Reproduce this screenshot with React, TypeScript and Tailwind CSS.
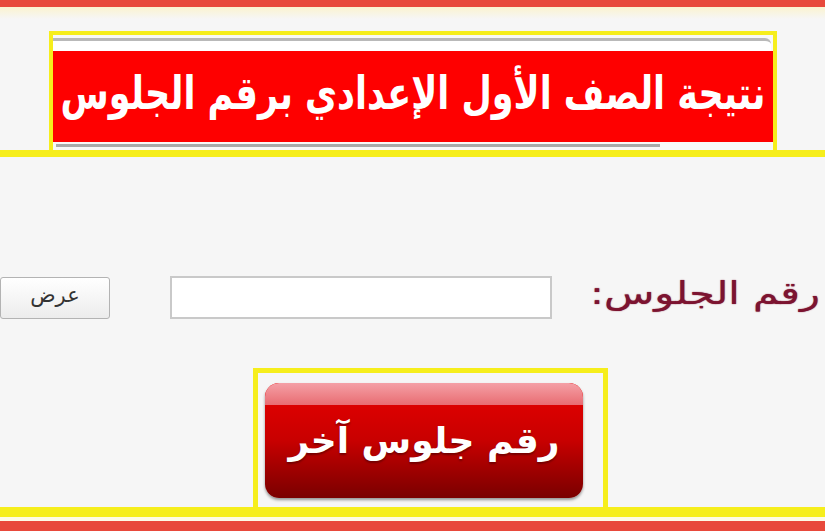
export default function App() {
  return (
    <div className="w-[825px] h-[531px] overflow-hidden bg-[#f6f6f6] flex flex-col" style={{ fontFamily: '"DejaVu Sans", "Noto Sans", sans-serif' }}>
      {/* شريط علوي */}
      <div className="h-[7px] bg-[#e8493b]" />
      <div className="h-[12px] bg-gradient-to-b from-[#fbf3cf] to-[#f6f6f6]" />

      {/* العنوان */}
      <div className="mt-[12px] border-b-[7px] border-[#f6ee1c]">
        <div className="ml-[49px] w-[728px] border-x-[4px] border-t-[4px] border-[#f6ee1c] bg-[#f8f8f8]">
          <div className="mt-[3px] h-[13px] bg-white border-t-[3px] border-[#b9b9b9] rounded-tr-[6px] mr-[2px]" />
          <div className="h-[91px] bg-[#fe0000] flex items-center justify-center overflow-hidden">
            <h1 dir="rtl" className="text-white font-bold text-[35px] whitespace-nowrap leading-none -mt-[4px] scale-y-[1.3]">
              نتيجة الصف الأول الإعدادي برقم الجلوس
            </h1>
          </div>
          <div className="h-[8px] pt-[2px]">
            <div className="h-[3px] w-[604px] ml-[3px] bg-[#a9a9a9]" />
          </div>
        </div>
      </div>

      {/* نموذج البحث */}
      <div className="flex-1 flex flex-col">
        <div className="mt-[119px] flex items-center h-[43px]">
          <button className="w-[110px] h-[42px] shrink-0 border border-[#b3b3b3] rounded-[3px] bg-gradient-to-b from-white to-[#ececec] text-[21px] text-[#333] leading-none pb-[4px]">
            عرض
          </button>
          <input className="ml-[60px] w-[382px] h-[43px] shrink-0 border-2 border-[#c9c9c9] bg-white outline-none" />
          <span dir="rtl" className="ml-[38px] -mt-[8px] shrink-0 whitespace-nowrap text-[31px] font-medium text-[#7c1330] origin-left scale-x-[1.33] [text-shadow:0_0_1px_#7c1330]">
            رقم الجلوس:
          </span>
        </div>

        <div className="mt-[49px] ml-[253px] w-[355px] h-[139px] border-x-[5px] border-t-[5px] border-[#f6ee1c] pt-[10px] pl-[7px]">
          <button className="relative w-[318px] h-[115px] rounded-[14px] overflow-hidden bg-gradient-to-b from-[#e80000] via-[#c80000] to-[#7a0000] shadow-[0_2px_3px_rgba(0,0,0,0.4)]">
            <span className="absolute left-0 right-0 top-0 h-[22px] bg-gradient-to-b from-[#f4a0a6] to-[#e86b72] rounded-t-[14px]" />
            <span dir="rtl" className="relative block text-white font-bold text-[36px] whitespace-nowrap [text-shadow:0_2px_2px_rgba(80,0,0,0.6)]">
              رقم جلوس آخر
            </span>
          </button>
        </div>
      </div>

      {/* شريط سفلي */}
      <div className="h-[10px] bg-[#f6ee1c]" />
      <div className="h-[4px] bg-[#fdfbe6]" />
      <div className="h-[10px] bg-[#e8493b]" />
    </div>
  );
}
